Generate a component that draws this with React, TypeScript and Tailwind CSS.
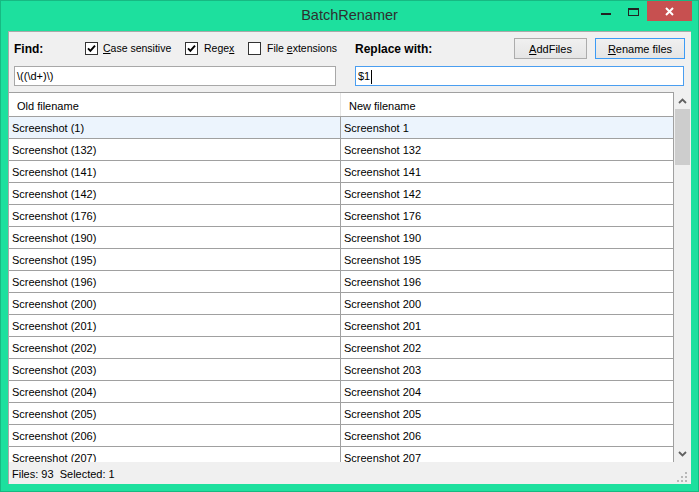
import React from "react";

const rows: [string, string][] = [
  ["Screenshot (1)", "Screenshot 1"],
  ["Screenshot (132)", "Screenshot 132"],
  ["Screenshot (141)", "Screenshot 141"],
  ["Screenshot (142)", "Screenshot 142"],
  ["Screenshot (176)", "Screenshot 176"],
  ["Screenshot (190)", "Screenshot 190"],
  ["Screenshot (195)", "Screenshot 195"],
  ["Screenshot (196)", "Screenshot 196"],
  ["Screenshot (200)", "Screenshot 200"],
  ["Screenshot (201)", "Screenshot 201"],
  ["Screenshot (202)", "Screenshot 202"],
  ["Screenshot (203)", "Screenshot 203"],
  ["Screenshot (204)", "Screenshot 204"],
  ["Screenshot (205)", "Screenshot 205"],
  ["Screenshot (206)", "Screenshot 206"],
  ["Screenshot (207)", "Screenshot 207"],
];

function Box({ checked }: { checked: boolean }) {
  return (
    <span className="w-[13px] h-[13px] shrink-0 border border-[#333] bg-white flex items-center justify-center">
      {checked && (
        <svg width="9" height="9" viewBox="0 0 9 9">
          <path d="M1 4.3 L3.4 6.8 L8 1.6" stroke="#000" strokeWidth="1.9" fill="none" />
        </svg>
      )}
    </span>
  );
}

function Chevron({ up }: { up: boolean }) {
  return (
    <svg width="9" height="6" viewBox="0 0 9 6">
      <path d={up ? "M1 5 L4.5 1.5 L8 5" : "M1 1 L4.5 4.5 L8 1"} stroke="#606060" strokeWidth="1.8" fill="none" />
    </svg>
  );
}

export default function App() {
  return (
    <div className="w-[699px] h-[492px] bg-[#1de09e] border border-[#17b982] flex flex-col font-['Liberation_Sans',Arial,sans-serif] text-[11px] text-black overflow-hidden">
      {/* title bar */}
      <div className="h-[30px] shrink-0 grid grid-cols-[1fr_auto_1fr]">
        <div />
        <div className="flex items-center text-[14.5px] text-[#2f2f2f] pb-[1px]">BatchRenamer</div>
        <div className="flex justify-end items-start">
          <div className="w-[10px] h-[2px] bg-[#222] mt-[12px] mr-[17px]" />
          <div className="w-[11px] h-[8px] border border-[#222] border-t-2 mt-[7px] mr-[8px]" />
          <div className="w-[45px] h-[20px] bg-[#c75050] flex items-center justify-center mr-[6px]">
            <svg width="9" height="9" viewBox="0 0 9 9">
              <path d="M1 1 L8 8 M8 1 L1 8" stroke="#fff" strokeWidth="2" />
            </svg>
          </div>
        </div>
      </div>

      {/* client area */}
      <div className="flex-1 mx-[7px] mb-[7px] bg-[#f0f0f0] border-l border-t border-[#a9a9a9] flex flex-col">
        {/* find/replace header row */}
        <div className="h-[21px] mt-[6px] flex items-center shrink-0">
          <div className="w-[340px] flex items-center pl-[5px]">
            <span className="w-[71px] font-bold text-[12px] pt-[1px]">Find:</span>
            <label className="w-[100px] flex items-center">
              <Box checked />
              <span className="ml-[5px] pt-[1px] text-[10.5px]"><u>C</u>ase sensitive</span>
            </label>
            <label className="w-[63px] flex items-center">
              <Box checked />
              <span className="ml-[6px] pt-[1px] text-[10.5px]">Rege<u>x</u></span>
            </label>
            <label className="flex items-center">
              <Box checked={false} />
              <span className="ml-[6px] pt-[1px] text-[10.5px]">File <u>e</u>xtensions</span>
            </label>
          </div>
          <div className="flex-1 flex items-center pl-[6px] pr-[6px]">
            <span className="font-bold text-[12px] pt-[1px]">Replace with:</span>
            <button className="ml-auto w-[73px] h-[21px] border border-[#acacac] bg-gradient-to-b from-[#f0f0f0] to-[#e5e5e5] text-[11px] pt-[1px]">
              <u>A</u>ddFiles
            </button>
            <button className="ml-[8px] w-[90px] h-[21px] border border-[#3c9bf5] bg-gradient-to-b from-[#f0f0f0] to-[#e5e5e5] text-[11px] pt-[1px]">
              <u>R</u>ename files
            </button>
          </div>
        </div>

        {/* inputs */}
        <div className="h-[20px] mt-[7px] flex shrink-0">
          <div className="ml-[5px] w-[322px] h-[20px] bg-white border border-[#a8a8a8] flex items-center pl-[2px] pt-[1px]">
            \((\d+)\)
          </div>
          <div className="ml-[19px] w-[329px] h-[20px] bg-white border border-[#4a9ef0] flex items-center pl-[2px] pt-[1px]">
            $1<span className="w-[1px] h-[14px] bg-black ml-[1px]" />
          </div>
        </div>

        {/* list + scrollbar */}
        <div className="mt-[6px] h-[370px] flex shrink-0">
          <div className="w-[665px] border-t border-r border-[#a0a0a0] bg-white flex flex-col overflow-hidden">
            <div className="h-[24px] shrink-0 flex border-b border-[#a0a0a0] bg-white">
              <div className="w-[332px] border-r border-[#e5e5e5] flex items-center pl-[8px] pt-[3px]">Old filename</div>
              <div className="flex-1 flex items-center pl-[8px] pt-[3px]">New filename</div>
            </div>
            {rows.map(([a, b], i) => (
              <div
                key={a}
                className={`h-[22px] shrink-0 flex border-b border-[#a0a0a0] ${i === 0 ? "bg-[#ecf4fd]" : "bg-white"}`}
              >
                <div className="w-[332px] border-r border-[#a0a0a0] flex items-center pl-[3px] pt-[2px]">{a}</div>
                <div className="flex-1 flex items-center pl-[3px] pt-[2px]">{b}</div>
              </div>
            ))}
          </div>
          <div className="w-[17px] bg-[#f0f0f0] flex flex-col">
            <div className="h-[17px] flex items-center justify-center pt-[1px]">
              <Chevron up />
            </div>
            <div className="ml-[1px] w-[15px] h-[56px] bg-[#cdcdcd]" />
            <div className="flex-1" />
            <div className="h-[17px] flex items-center justify-center">
              <Chevron up={false} />
            </div>
          </div>
        </div>

        {/* status bar */}
        <div className="flex-1 flex items-center pl-[3px]">
          <span className="pt-[2px]">Files: 93&nbsp;&nbsp;Selected: 1</span>
          <svg className="ml-auto mr-[3px] mt-[9px]" width="11" height="11" viewBox="0 0 11 11">
            <rect x="8" y="0" width="2" height="2" fill="#b8b8b8" />
            <rect x="4" y="4" width="2" height="2" fill="#b8b8b8" />
            <rect x="8" y="4" width="2" height="2" fill="#b8b8b8" />
            <rect x="0" y="8" width="2" height="2" fill="#b8b8b8" />
            <rect x="4" y="8" width="2" height="2" fill="#b8b8b8" />
            <rect x="8" y="8" width="2" height="2" fill="#b8b8b8" />
          </svg>
        </div>
      </div>
    </div>
  );
}
